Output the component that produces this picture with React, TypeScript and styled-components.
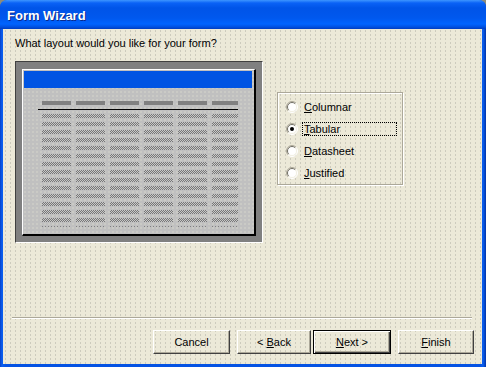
import React from 'react'
import styled, { createGlobalStyle } from 'styled-components'

const GlobalStyle = createGlobalStyle`
  html, body {
    margin: 0;
    padding: 0;
    background: #8d8b7a;
  }
  #root {
    width: 486px;
    height: 367px;
  }
  * {
    box-sizing: border-box;
  }
`

const COLUMNS = 6
const ROWS = 14

function RadioIcon({ checked }: { checked?: boolean }) {
  return (
    <svg width="12" height="12" viewBox="0 0 12 12">
      <circle cx="6" cy="6" r="5" fill="#fff" />
      <path d="M2.1 9.9 A5.5 5.5 0 0 1 9.9 2.1" fill="none" stroke="#aca899" />
      <path d="M2.8 9.2 A4.5 4.5 0 0 1 9.2 2.8" fill="none" stroke="#716f64" />
      <path d="M9.9 2.1 A5.5 5.5 0 0 1 2.1 9.9" fill="none" stroke="#fff" />
      <path d="M9.2 2.8 A4.5 4.5 0 0 1 2.8 9.2" fill="none" stroke="#f1efe2" />
      {checked && <circle cx="6" cy="6" r="2" fill="#000" />}
    </svg>
  )
}

const options = [
  { key: 'C', rest: 'olumnar' },
  { key: 'T', rest: 'abular', checked: true },
  { key: 'D', rest: 'atasheet' },
  { key: 'J', rest: 'ustified' },
]

export default function App() {
  return (
    <>
      <GlobalStyle />
      <Window>
        <TitleBar>Form Wizard</TitleBar>
        <Body>
          <Prompt>What layout would you like for your form?</Prompt>
          <Content>
            <PreviewFrame>
              <PreviewPanel>
                <PreviewTitle />
                <Table>
                  <ColumnGrid>
                    {Array.from({ length: COLUMNS }).map((_, i) => (
                      <HeaderCell key={i} />
                    ))}
                  </ColumnGrid>
                  <Rule />
                  <Rows>
                    {Array.from({ length: ROWS }).map((_, r) => (
                      <ColumnGrid key={r}>
                        {Array.from({ length: COLUMNS }).map((_, i) => (
                          <DataCell key={i} />
                        ))}
                      </ColumnGrid>
                    ))}
                    <ColumnGrid>
                      {Array.from({ length: COLUMNS }).map((_, i) => (
                        <PartialCell key={i} />
                      ))}
                    </ColumnGrid>
                  </Rows>
                </Table>
              </PreviewPanel>
            </PreviewFrame>
            <OptionGroup>
              {options.map(o => (
                <Option key={o.key}>
                  <RadioIcon checked={o.checked} />
                  <OptionLabel $focused={o.checked}>
                    <u>{o.key}</u>
                    {o.rest}
                  </OptionLabel>
                </Option>
              ))}
            </OptionGroup>
          </Content>
          <Separator />
          <ButtonRow>
            <Button $w={77} $gap={0}>
              <span>Cancel</span>
            </Button>
            <Button $w={74} $gap={7}>
              <span>
                {'< '}
                <u>B</u>ack
              </span>
            </Button>
            <Button $w={78} $gap={2} $default>
              <span>
                <u>N</u>
                {'ext >'}
              </span>
            </Button>
            <Button $w={76} $gap={7}>
              <span>
                <u>F</u>inish
              </span>
            </Button>
          </ButtonRow>
        </Body>
      </Window>
    </>
  )
}

const Window = styled.div`
  width: 486px;
  height: 367px;
  display: flex;
  flex-direction: column;
  background: linear-gradient(90deg, #0841c8 0, #0a5ff0 2px, #0553e4 6px, #0553e4 480px, #0a5ff0 483px, #0033a8 486px);
  border-radius: 7px 7px 0 0;
  overflow: hidden;
  font-family: 'Liberation Sans', Arial, sans-serif;
  font-size: 11px;
  color: #000;
`

const TitleBar = styled.div`
  flex: none;
  height: 29px;
  padding: 8px 0 0 7px;
  background: linear-gradient(
    180deg,
    #3d95ff 0,
    #0a62f6 3px,
    #0054e8 8px,
    #0058ee 18px,
    #0064ff 24px,
    #0050e0 27px,
    #003dc0 29px
  );
  color: #fff;
  font-size: 13px;
  font-weight: bold;
  line-height: 15px;
  text-shadow: 1px 1px 0 #0b2a8c;
`

const Body = styled.div`
  flex: 1;
  margin: 0 4px 3px 3px;
  display: flex;
  flex-direction: column;
  background-color: #ece9d8;
  background-image: radial-gradient(circle, #cdcbbd 0.6px, transparent 0.9px);
  background-size: 5px 4px;
`

const Prompt = styled.div`
  padding: 8px 0 0 12px;
  line-height: 13px;
`

const Content = styled.div`
  display: flex;
  align-items: flex-start;
  margin-top: 11px;
  padding-left: 12px;
`

const PreviewFrame = styled.div`
  width: 248px;
  padding: 7px 6px 6px 6px;
  background: #808080;
  border: 1px solid;
  border-color: #404040 #fff #fff #404040;
`

const PreviewPanel = styled.div`
  height: 167px;
  padding: 1px;
  background-color: #c0c0c0;
  background-image: radial-gradient(circle, #cfcfc8 0.6px, transparent 0.9px);
  background-size: 4px 4px;
  border-style: solid;
  border-width: 1px 2px 2px 1px;
  border-color: #fff #000 #000 #fff;
`

const PreviewTitle = styled.div`
  height: 17px;
  margin-right: 1px;
  background: #0054e3;
`

const Table = styled.div`
  padding: 13px 0 0 14px;
`

const ColumnGrid = styled.div`
  display: grid;
  grid-template-columns: repeat(5, 29px) 26px;
  column-gap: 5px;
  margin-left: 4px;
`

const HeaderCell = styled.div`
  height: 4px;
  background: #808080;
`

const Rule = styled.div`
  width: 200px;
  height: 1px;
  margin-top: 4px;
  background: #000;
`

const Rows = styled.div`
  display: flex;
  flex-direction: column;
  gap: 4px;
  margin-top: 4px;
`

const DataCell = styled.div`
  height: 4px;
  background: repeating-conic-gradient(#777 0 25%, #c8c8c8 0 50%) 0 0 / 2px 2px;
`

const PartialCell = styled.div`
  height: 1px;
  background: repeating-linear-gradient(90deg, #808080 0 1px, transparent 1px 3px);
`

const OptionGroup = styled.div`
  width: 126px;
  margin: 31px 0 0 14px;
  padding: 3px 0 0 8px;
  border: 1px solid #aca899;
  box-shadow: inset 1px 1px 0 #fff, 1px 1px 0 #fff;
`

const Option = styled.div`
  height: 22px;
  display: flex;
  align-items: center;
  gap: 4px;
`

const OptionLabel = styled.span<{ $focused?: boolean }>`
  width: 95px;
  height: 14px;
  padding: 0 1px;
  line-height: 12px;
  border: 1px dotted ${p => (p.$focused ? '#000' : 'transparent')};
`

const Separator = styled.div`
  margin: auto 10px 0 9px;
  height: 2px;
  border-top: 1px solid #aca899;
  border-bottom: 1px solid #fff;
`

const ButtonRow = styled.div`
  display: flex;
  justify-content: flex-end;
  padding: 11px 8px 10px 0;
`

const Button = styled.div<{ $w: number; $gap: number; $default?: boolean }>`
  width: ${p => p.$w}px;
  height: 24px;
  margin-left: ${p => p.$gap}px;
  display: flex;
  align-items: center;
  justify-content: center;
  line-height: 13px;
  padding-top: 1px;
  white-space: pre;
  border: 1px solid;
  border-color: ${p => (p.$default ? '#000' : '#fff #404040 #404040 #fff')};
  box-shadow: ${p =>
    p.$default
      ? 'inset 1px 1px 0 #fff, inset -1px -1px 0 #404040, inset -2px -2px 0 #aca899'
      : 'inset -1px -1px 0 #aca899'};
`
